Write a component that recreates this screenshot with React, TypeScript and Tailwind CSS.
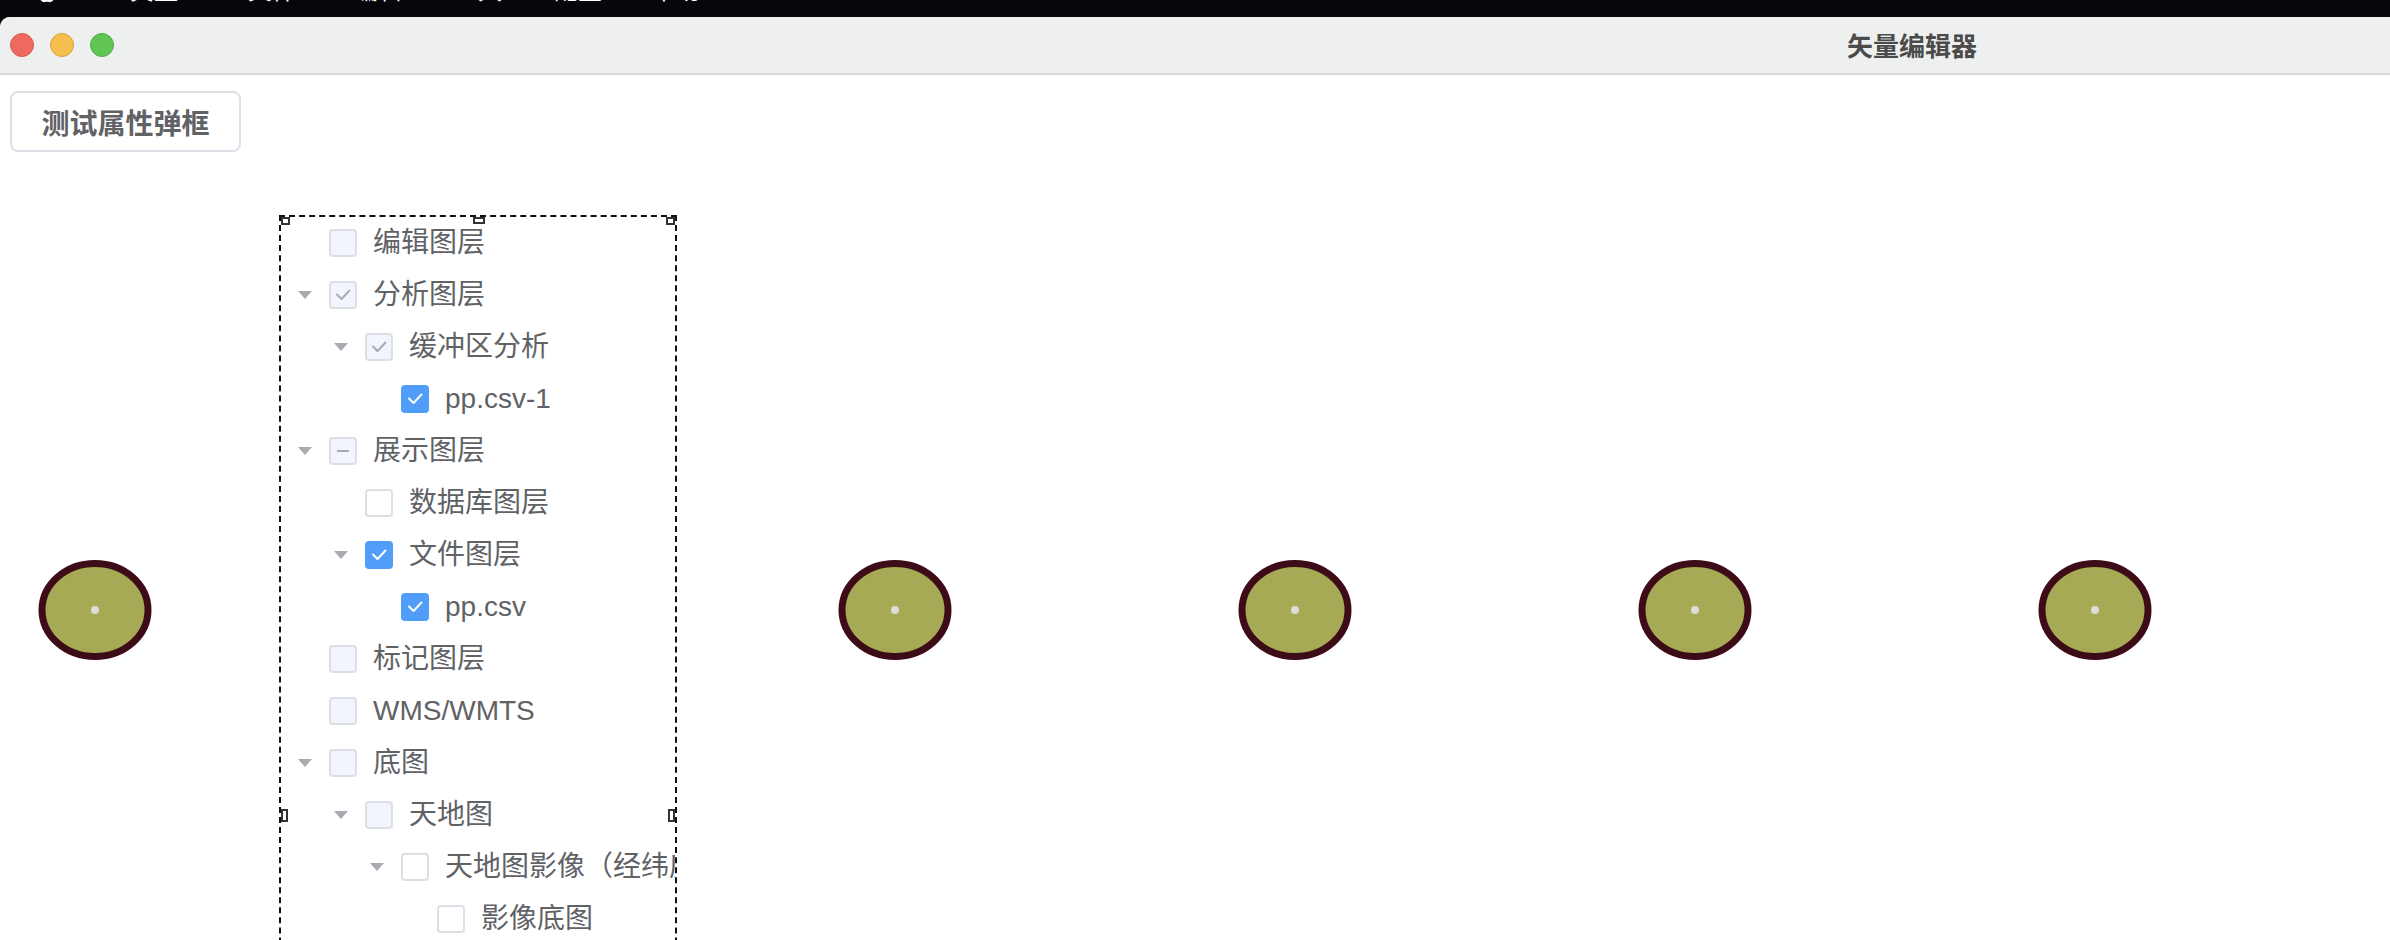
import React from "react";

type State = "disabled" | "disabledChecked" | "disabledIndeterminate" | "checked" | "unchecked";

interface Row {
  label: string;
  level: number;
  arrow: boolean;
  state: State;
}

const rows: Row[] = [
  { label: "编辑图层", level: 0, arrow: false, state: "disabled" },
  { label: "分析图层", level: 0, arrow: true, state: "disabledChecked" },
  { label: "缓冲区分析", level: 1, arrow: true, state: "disabledChecked" },
  { label: "pp.csv-1", level: 2, arrow: false, state: "checked" },
  { label: "展示图层", level: 0, arrow: true, state: "disabledIndeterminate" },
  { label: "数据库图层", level: 1, arrow: false, state: "unchecked" },
  { label: "文件图层", level: 1, arrow: true, state: "checked" },
  { label: "pp.csv", level: 2, arrow: false, state: "checked" },
  { label: "标记图层", level: 0, arrow: false, state: "disabled" },
  { label: "WMS/WMTS", level: 0, arrow: false, state: "disabled" },
  { label: "底图", level: 0, arrow: true, state: "disabled" },
  { label: "天地图", level: 1, arrow: true, state: "disabled" },
  { label: "天地图影像（经纬度）", level: 2, arrow: true, state: "unchecked" },
  { label: "影像底图", level: 3, arrow: false, state: "unchecked" },
  { label: "注记图层", level: 3, arrow: false, state: "unchecked" },
];

const indent = ["pl-0", "pl-[36px]", "pl-[72px]", "pl-[108px]"];

function Checkbox({ state }: { state: State }) {
  const box =
    state === "checked"
      ? "bg-[#509ef8] border-[#509ef8]"
      : state === "unchecked"
      ? "bg-white border-[#dcdfe6]"
      : "bg-[#f2f5fb] border-[#dcdfe6]";
  return (
    <div className={`w-[28px] h-[28px] shrink-0 rounded-[4px] border-2 ${box} flex items-center justify-center`}>
      {(state === "checked" || state === "disabledChecked") && (
        <svg width="24" height="24" viewBox="0 0 24 24">
          <polyline
            points="6,11.5 10.5,16 18.5,7.5"
            fill="none"
            stroke={state === "checked" ? "#ffffff" : "#a8abb2"}
            strokeWidth="2"
            strokeLinecap="round"
            strokeLinejoin="round"
          />
        </svg>
      )}
      {state === "disabledIndeterminate" && <div className="w-[12px] h-[2px] bg-[#a8abb2]" />}
    </div>
  );
}

function Caret() {
  return (
    <svg width="14" height="8" viewBox="0 0 14 8">
      <polygon points="0,0 14,0 7,8" fill="#a8abb2" />
    </svg>
  );
}

function TreeRow({ row }: { row: Row }) {
  return (
    <div className={`h-[52px] flex items-center whitespace-nowrap ${indent[row.level]}`}>
      <div className="w-[48px] h-[52px] shrink-0 flex items-center justify-center">{row.arrow && <Caret />}</div>
      <Checkbox state={row.state} />
      <span className="ml-[16px] text-[28px] leading-[52px] text-[#606266]">{row.label}</span>
    </div>
  );
}

const ellipseXs = [94, 494, 894, 1294, 1694, 2094];

export default function App() {
  return (
    <div className="w-[2390px] h-[940px] overflow-hidden bg-[#07070b] flex flex-col font-['Liberation_Sans','Noto_Sans_CJK_SC',sans-serif]">
      {/* macOS menu bar (mostly cut off) */}
      <div className="h-[17px] shrink-0 overflow-hidden relative">
        <div className="flex items-end h-[17px] -translate-y-[12px] text-white text-[24px] leading-[29px] whitespace-nowrap">
          <svg width="22" height="26" viewBox="0 0 22 26" className="ml-[36px] mb-[1px]">
            <path d="M11 5 C 5 3, 0 7, 1 14 C 2 20, 6 25, 9 24 C 10 23.5, 12 23.5, 13 24 C 16 25, 20 20, 21 14 C 22 7, 17 3, 11 5 Z" fill="#ffffff" />
          </svg>
          <span className="ml-[72px] font-bold">矢量</span>
          <span className="ml-[70px]">文件</span>
          <span className="ml-[58px]">编辑</span>
          <span className="ml-[52px]">工具</span>
          <span className="ml-[52px]">配置</span>
          <span className="ml-[50px]">帮助</span>
        </div>
      </div>

      {/* window */}
      <div className="flex-1 flex flex-col bg-white rounded-tl-[10px] overflow-hidden">
        {/* title bar */}
        <div className="h-[58px] shrink-0 bg-[#eef0ef] border-b-2 border-[#d7d8d7] flex items-center">
          <div className="flex items-center gap-[16px] ml-[10px]">
            <div className="w-[24px] h-[24px] rounded-full bg-[#ee6a5f] border border-[#d8574c]" />
            <div className="w-[24px] h-[24px] rounded-full bg-[#f5bf4f] border border-[#d9a23c]" />
            <div className="w-[24px] h-[24px] rounded-full bg-[#61c554] border border-[#4fab43]" />
          </div>
          <div className="ml-[1733px] text-[26px] font-bold text-[#4b4b4b] font-['Noto_Sans_CJK_SC',sans-serif] leading-none">
            矢量编辑器
          </div>
        </div>

        {/* content */}
        <div className="flex-1 relative">
          <svg className="absolute left-0 top-0" width="2390" height="865" viewBox="0 0 2390 865">
            {ellipseXs.map((x) => (
              <g key={x}>
                <ellipse cx={x + 1} cy={535} rx={53} ry={46.5} fill="#a6aa54" stroke="#3e0c18" strokeWidth={7} />
                <circle cx={x + 1} cy={535} r={4} fill="#dcdcdc" />
              </g>
            ))}
          </svg>

          <div className="relative pt-[16px] pl-[10px]">
            <button className="w-[231px] h-[61px] rounded-[8px] border-2 border-[#dcdfe6] bg-white text-[28px] font-semibold text-[#606266] font-['Noto_Sans_CJK_SC',sans-serif] flex items-center justify-center">
              测试属性弹框
            </button>
          </div>

          <div className="absolute left-[279px] top-[140px] w-[398px] h-[1200px] bg-white border-2 border-dashed border-[#111111] overflow-hidden">
            <div className="flex flex-col">
              {rows.map((r) => (
                <TreeRow key={r.label} row={r} />
              ))}
            </div>
            <div className="absolute left-0 top-0 w-[9px] h-[8px] border-2 border-[#333] bg-white" />
            <div className="absolute left-[192px] top-0 w-[12px] h-[7px] border-2 border-[#333] bg-white" />
            <div className="absolute right-0 top-0 w-[9px] h-[8px] border-2 border-[#333] bg-white" />
            <div className="absolute left-0 top-[592px] w-[7px] h-[13px] border-2 border-[#333] bg-white" />
            <div className="absolute right-0 top-[592px] w-[7px] h-[13px] border-2 border-[#333] bg-white" />
          </div>
        </div>
      </div>
    </div>
  );
}
